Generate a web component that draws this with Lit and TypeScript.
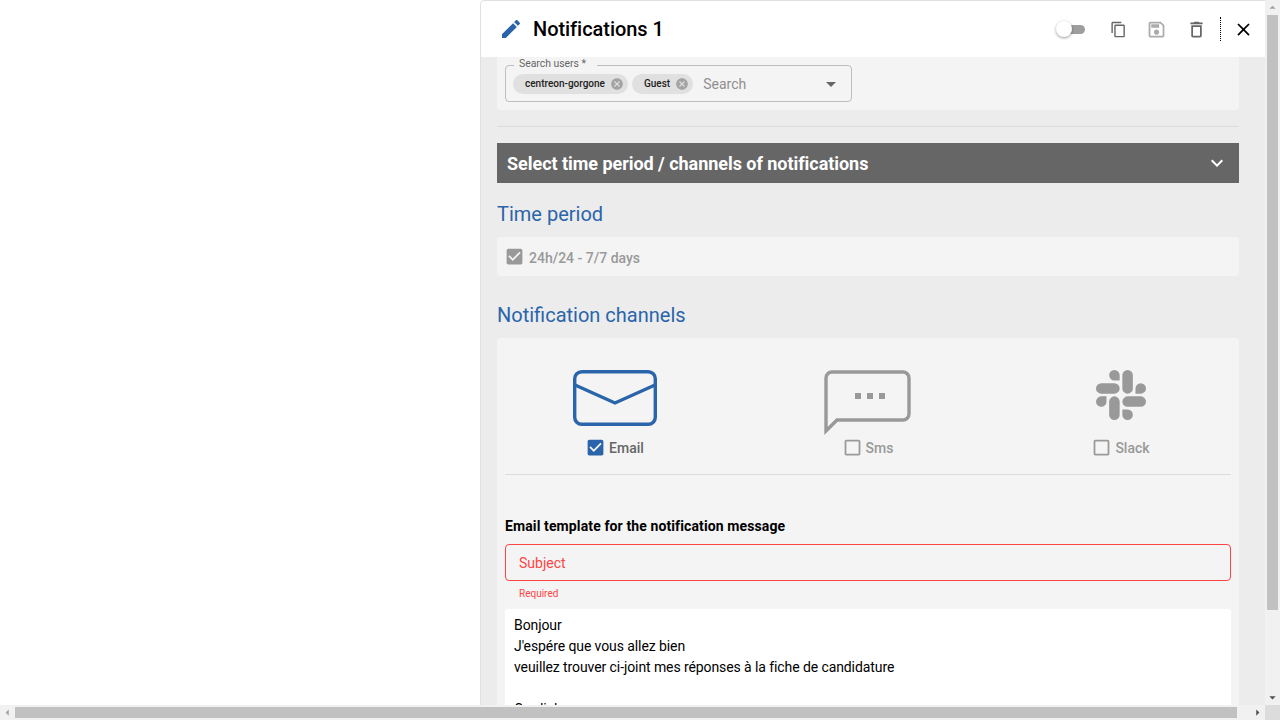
import { LitElement, css, html, svg } from 'lit';
import { customElement } from 'lit/decorators.js';

const icons = {
  edit: 'M3 17.25V21h3.75L17.81 9.94l-3.75-3.75L3 17.25zM20.71 7.04c.39-.39.39-1.02 0-1.41l-2.34-2.34c-.39-.39-1.02-.39-1.41 0l-1.83 1.83 3.75 3.75 1.83-1.83z',
  copy: 'M16 1H4c-1.1 0-2 .9-2 2v14h2V3h12V1zm3 4H8c-1.1 0-2 .9-2 2v14c0 1.1.9 2 2 2h11c1.1 0 2-.9 2-2V7c0-1.1-.9-2-2-2zm0 16H8V7h11v14z',
  save: 'M17 3H5c-1.11 0-2 .9-2 2v14c0 1.1.89 2 2 2h14c1.1 0 2-.9 2-2V7l-4-4zm2 16H5V5h11.17L19 7.83V19zm-7-7c-1.66 0-3 1.34-3 3s1.34 3 3 3 3-1.34 3-3-1.34-3-3-3zM6 6h9v4H6z',
  trash: 'M6 19c0 1.1.9 2 2 2h8c1.1 0 2-.9 2-2V7H6v12zM8 9h8v10H8V9zm7.5-5l-1-1h-5l-1 1H5v2h14V4z',
  close: 'M19 6.41L17.59 5 12 10.59 6.41 5 5 6.41 10.59 12 5 17.59 6.41 19 12 13.41 17.59 19 19 17.59 13.41 12z',
  cancel: 'M12 2C6.47 2 2 6.47 2 12s4.47 10 10 10 10-4.47 10-10S17.53 2 12 2zm5 13.59L15.59 17 12 13.41 8.41 17 7 15.59 10.59 12 7 8.41 8.41 7 12 10.59 15.59 7 17 8.41 13.41 12 17 15.59z',
  checked: 'M19 3H5c-1.11 0-2 .9-2 2v14c0 1.1.89 2 2 2h14c1.11 0 2-.9 2-2V5c0-1.1-.89-2-2-2zm-9 14l-5-5 1.41-1.41L10 14.17l7.59-7.59L19 8l-9 9z',
  unchecked: 'M19 5v14H5V5h14m0-2H5c-1.1 0-2 .9-2 2v14c0 1.1.9 2 2 2h14c1.1 0 2-.9 2-2V5c0-1.1-.9-2-2-2z',
  expand: 'M16.59 8.59L12 13.17 7.41 8.59 6 10l6 6 6-6z',
  arrow: 'M7 10l5 5 5-5z',
  slack: 'M5.042 15.165a2.528 2.528 0 0 1-2.52 2.523A2.528 2.528 0 0 1 0 15.165a2.527 2.527 0 0 1 2.522-2.52h2.52v2.52zM6.313 15.165a2.527 2.527 0 0 1 2.521-2.52 2.527 2.527 0 0 1 2.521 2.52v6.313A2.528 2.528 0 0 1 8.834 24a2.528 2.528 0 0 1-2.521-2.522v-6.313zM8.834 5.042a2.528 2.528 0 0 1-2.521-2.52A2.528 2.528 0 0 1 8.834 0a2.528 2.528 0 0 1 2.521 2.522v2.52H8.834zM8.834 6.313a2.528 2.528 0 0 1 2.521 2.521 2.528 2.528 0 0 1-2.521 2.521H2.522A2.528 2.528 0 0 1 0 8.834a2.528 2.528 0 0 1 2.522-2.521h6.312zM18.956 8.834a2.528 2.528 0 0 1 2.522-2.521A2.528 2.528 0 0 1 24 8.834a2.528 2.528 0 0 1-2.522 2.521h-2.522V8.834zM17.688 8.834a2.528 2.528 0 0 1-2.523 2.521 2.527 2.527 0 0 1-2.52-2.521V2.522A2.527 2.527 0 0 1 15.165 0a2.528 2.528 0 0 1 2.523 2.522v6.312zM15.165 18.956a2.528 2.528 0 0 1 2.523 2.522A2.528 2.528 0 0 1 15.165 24a2.527 2.527 0 0 1-2.52-2.522v-2.522h2.52zM15.165 17.688a2.527 2.527 0 0 1-2.52-2.523 2.526 2.526 0 0 1 2.52-2.52h6.313A2.527 2.527 0 0 1 24 15.165a2.528 2.528 0 0 1-2.522 2.523h-6.313z',
};

const icon = (name: keyof typeof icons, cls: string) => html`
  <svg class=${cls} viewBox="0 0 24 24" fill="currentColor">${svg`<path d=${icons[name]}></path>`}</svg>
`;

@customElement('app-root')
export class AppRoot extends LitElement {
  static styles = css`
    :host {
      display: grid;
      grid-template-columns: 1fr 15px;
      grid-template-rows: 1fr 15px;
      width: 1280px;
      height: 720px;
      overflow: hidden;
      background: #fff;
      font-family: Roboto, 'Liberation Sans', sans-serif;
    }

    svg {
      display: block;
      flex-shrink: 0;
    }

    .viewport {
      display: flex;
      min-height: 0;
      overflow: hidden;
    }

    .blank {
      width: 480px;
      flex-shrink: 0;
    }

    .panel {
      display: flex;
      flex-direction: column;
      width: 785px;
      flex-shrink: 0;
      box-sizing: border-box;
      background: #ececec;
      border-left: 1px solid #e0e0e0;
      border-top: 1px solid #e0e0e0;
      border-top-left-radius: 5px;
      overflow: hidden;
    }

    .header {
      display: flex;
      align-items: center;
      height: 56px;
      flex-shrink: 0;
      padding: 0 11px 0 18px;
      background: #fff;
    }

    .header__edit {
      width: 24px;
      height: 24px;
      color: #2a64aa;
      margin-right: 10px;
    }

    .header__title {
      font-size: 20px;
      font-weight: 500;
      line-height: 24px;
      letter-spacing: -0.05px;
      color: #000;
      flex: 1;
    }

    .toggle {
      position: relative;
      width: 22px;
      height: 9px;
      margin-right: 25px;
      border-radius: 5px;
      background: #9e9e9e;
    }

    .toggle__thumb {
      position: absolute;
      left: -7px;
      top: -3.5px;
      width: 16px;
      height: 16px;
      border-radius: 50%;
      background: #fff;
      box-shadow: 0 1px 3px rgba(0, 0, 0, 0.4);
    }

    .tool {
      width: 21px;
      height: 21px;
      color: #666;
      margin-left: 19px;
    }

    .tool--copy {
      width: 17px;
      height: 17px;
      margin-left: 0;
    }

    .tool--save {
      color: #ababab;
    }

    .tool--close {
      color: #000;
      margin-left: 12px;
    }

    .header__sep {
      width: 0;
      height: 24px;
      margin-left: 13px;
      border-left: 1px dotted #000;
    }

    .body {
      flex: 1;
      min-height: 0;
      overflow: hidden;
      padding: 0 26px 0 16px;
    }

    .card {
      background: #f4f4f4;
      border-radius: 4px;
    }

    .card--users {
      padding: 8px;
      border-radius: 0 0 4px 4px;
    }

    .field {
      position: relative;
      display: flex;
      align-items: center;
      box-sizing: border-box;
      width: 347px;
      height: 37px;
      padding: 0 11px 0 7px;
      border: 1px solid #bdbdbd;
      border-radius: 4px;
    }

    .field__label {
      position: absolute;
      left: 8px;
      top: -8px;
      padding: 0 11px 0 5px;
      font-size: 10.4px;
      line-height: 12px;
      color: #666;
      background: #f4f4f4;
    }

    .chip {
      display: flex;
      align-items: center;
      height: 20px;
      margin-right: 4px;
      padding: 0 4px 0 12px;
      border-radius: 10px;
      font-size: 10px;
      font-weight: 500;
      color: #222;
      background: #e0e0e0;
    }

    .chip__remove {
      width: 14px;
      height: 14px;
      margin-left: 5px;
      color: #a3a3a3;
    }

    .field__input {
      flex: 1;
      margin-left: 6px;
      font-size: 14px;
      color: #8f8f8f;
    }

    .field__arrow {
      width: 24px;
      height: 24px;
      color: #666;
      margin-right: -3px;
    }

    .rule {
      height: 1px;
      margin: 16px 0;
      background: #dcdcdc;
    }

    .accordion {
      display: flex;
      align-items: center;
      justify-content: space-between;
      height: 40px;
      padding: 0 10px;
      background: #666;
      color: #fff;
      font-size: 18px;
      font-weight: 700;
      letter-spacing: -0.04px;
    }

    .accordion svg {
      width: 24px;
      height: 24px;
    }

    .section-title {
      margin: 19px 0 11px;
      font-size: 20px;
      font-weight: 400;
      line-height: 24px;
      color: #2a64aa;
    }

    .section-title--channels {
      margin-top: 27px;
    }

    .card--period {
      display: flex;
      align-items: center;
      gap: 4px;
      height: 39px;
      padding-left: 7px;
      font-size: 14px;
      font-weight: 500;
      color: #999;
    }

    .card--period span {
      padding-top: 2px;
    }

    .check {
      width: 21px;
      height: 21px;
    }

    .card--channels {
      padding: 32px 8px 0;
    }

    .channels {
      display: grid;
      grid-template-columns: repeat(3, 1fr);
      column-gap: 33px;
      height: 104px;
      border-bottom: 1px solid #dcdcdc;
    }

    .channel {
      display: flex;
      flex-direction: column;
      align-items: center;
      color: #999;
    }

    .channel--active {
      color: #2a64aa;
    }

    .channel__art {
      height: 66px;
    }

    .channel__art--mail {
      width: 84px;
      height: 56px;
      margin-bottom: 10px;
      fill: none;
    }

    .channel__art--sms {
      width: 87px;
      height: 66px;
      margin-right: 2px;
      fill: none;
    }

    .channel__art--slack {
      width: 50px;
      height: 50px;
      margin-bottom: 16px;
    }

    .channel__choice {
      display: flex;
      align-items: center;
      gap: 3px;
      height: 24px;
      padding-right: 1px;
      font-size: 14px;
      font-weight: 500;
    }

    .channel__choice svg {
      margin-top: -2px;
    }

    .channel--active .channel__choice span {
      color: #666;
    }

    .template-title {
      margin-top: 42px;
      font-size: 14px;
      font-weight: 700;
      line-height: 18px;
      letter-spacing: 0.116px;
      color: #000;
    }

    .subject {
      display: flex;
      align-items: center;
      box-sizing: border-box;
      height: 37px;
      margin-top: 9px;
      padding-left: 13px;
      border: 1px solid #f44;
      border-radius: 4px;
      font-size: 14px;
      color: #f44;
    }

    .subject__hint {
      margin: 6px 0 9px 14px;
      font-size: 10px;
      line-height: 13px;
      color: #f44;
    }

    .message {
      height: 120px;
      padding: 6px 9px;
      border-radius: 4px;
      background: #fff;
      font-size: 14px;
      line-height: 21px;
      letter-spacing: -0.09px;
      color: #000;
    }

    .bar {
      display: flex;
      background: #f1f1f1;
    }

    .bar--v {
      flex-direction: column;
    }

    .bar__btn {
      width: 15px;
      height: 15px;
      flex-shrink: 0;
      color: #505050;
    }

    .bar__btn--off {
      color: #a3a3a3;
    }

    .bar__btn--up {
      transform: rotate(180deg);
    }

    .bar__btn--left {
      transform: rotate(90deg);
    }

    .bar__btn--right {
      transform: rotate(-90deg);
    }

    .bar__thumb {
      background: #c1c1c1;
    }

    .bar--v .bar__thumb {
      width: 11px;
      height: 595px;
      margin: 0 2px;
    }

    .bar--v .bar__gap,
    .bar--h .bar__gap {
      flex: 1;
    }

    .bar--h .bar__thumb {
      width: 1222px;
      height: 11px;
      margin: 2px 0;
    }

    .corner {
      background: #dcdcdc;
    }
  `;

  render() {
    return html`
      <div class="viewport">
        <div class="blank"></div>
        <section class="panel">
          <header class="header">
            ${icon('edit', 'header__edit')}
            <div class="header__title">Notifications 1</div>
            <div class="toggle"><div class="toggle__thumb"></div></div>
            ${icon('copy', 'tool tool--copy')}
            ${icon('save', 'tool tool--save')}
            ${icon('trash', 'tool')}
            <div class="header__sep"></div>
            ${icon('close', 'tool tool--close')}
          </header>
          <div class="body">
            <div class="card card--users">
              <div class="field">
                <span class="field__label">Search users *</span>
                <div class="chip">centreon-gorgone${icon('cancel', 'chip__remove')}</div>
                <div class="chip">Guest${icon('cancel', 'chip__remove')}</div>
                <div class="field__input">Search</div>
                ${icon('arrow', 'field__arrow')}
              </div>
            </div>
            <div class="rule"></div>
            <div class="accordion">
              <span>Select time period / channels of notifications</span>
              ${icon('expand', '')}
            </div>
            <h2 class="section-title">Time period</h2>
            <div class="card card--period">
              ${icon('checked', 'check')}
              <span>24h/24 - 7/7 days</span>
            </div>
            <h2 class="section-title section-title--channels">Notification channels</h2>
            <div class="card card--channels">
              <div class="channels">
                <div class="channel channel--active">
                  <svg class="channel__art channel__art--mail" viewBox="0 0 84 56" stroke="currentColor" stroke-width="3.4">
                    <rect x="1.7" y="1.7" width="80.6" height="52.6" rx="7"></rect>
                    <path d="M2 15l40 18 40-18"></path>
                  </svg>
                  <div class="channel__choice">${icon('checked', 'check')}<span>Email</span></div>
                </div>
                <div class="channel">
                  <svg class="channel__art channel__art--sms" viewBox="0 0 87 66" stroke="currentColor" stroke-width="3.4">
                    <path d="M2 61V8a6 6 0 0 1 6-6h71a6 6 0 0 1 6 6v36a6 6 0 0 1-6 6H13z"></path>
                    <path d="M31 23h6v6h-6zM43 23h6v6h-6zM55 23h6v6h-6z" fill="currentColor" stroke="none"></path>
                  </svg>
                  <div class="channel__choice">${icon('unchecked', 'check')}<span>Sms</span></div>
                </div>
                <div class="channel">
                  ${icon('slack', 'channel__art channel__art--slack')}
                  <div class="channel__choice">${icon('unchecked', 'check')}<span>Slack</span></div>
                </div>
              </div>
              <div class="template-title">Email template for the notification message</div>
              <div class="subject">Subject</div>
              <div class="subject__hint">Required</div>
              <div class="message">
                Bonjour<br />
                J'espére que vous allez bien<br />
                veuillez trouver ci-joint mes réponses à la fiche de candidature<br />
                <br />
                Cordial
              </div>
            </div>
          </div>
        </section>
      </div>
      <div class="bar bar--v">
        ${icon('arrow', 'bar__btn bar__btn--off bar__btn--up')}
        <div class="bar__thumb"></div>
        <div class="bar__gap"></div>
        ${icon('arrow', 'bar__btn')}
      </div>
      <div class="bar bar--h">
        ${icon('arrow', 'bar__btn bar__btn--off bar__btn--left')}
        <div class="bar__thumb"></div>
        <div class="bar__gap"></div>
        ${icon('arrow', 'bar__btn bar__btn--right')}
      </div>
      <div class="corner"></div>
    `;
  }
}
